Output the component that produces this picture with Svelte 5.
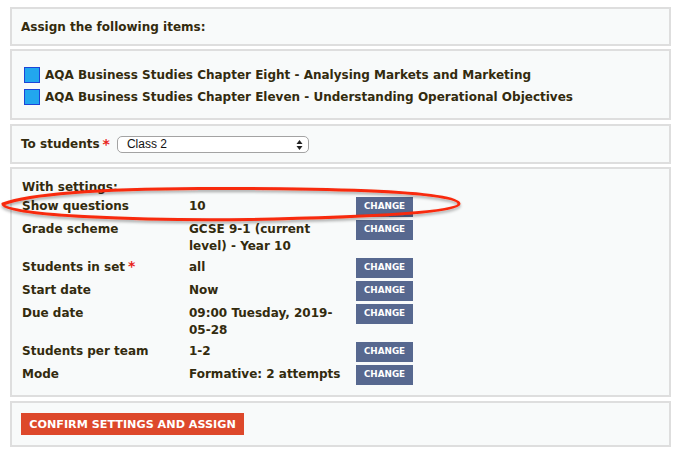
<script>
	const items = [
		'AQA Business Studies Chapter Eight - Analysing Markets and Marketing',
		'AQA Business Studies Chapter Eleven - Understanding Operational Objectives'
	];

	const settings = [
		{ label: 'Show questions', value: '10' },
		{ label: 'Grade scheme', value: 'GCSE 9-1 (current level) - Year 10' },
		{ label: 'Students in set', value: 'all', required: true },
		{ label: 'Start date', value: 'Now' },
		{ label: 'Due date', value: '09:00 Tuesday, 2019-05-28' },
		{ label: 'Students per team', value: '1-2' },
		{ label: 'Mode', value: 'Formative: 2 attempts' }
	];
</script>

<div class="page">
	<section class="panel heading">
		<strong>Assign the following items:</strong>
	</section>

	<section class="panel items">
		{#each items as item}
			<div class="item">
				<span class="item-icon"></span>
				<strong>{item}</strong>
			</div>
		{/each}
	</section>

	<section class="panel students">
		<strong>To students</strong><span class="req">*</span>
		<span class="select-wrap">
			<select>
				<option>Class 2</option>
			</select>
			<svg class="select-arrows" width="7" height="10" viewBox="0 0 7 10" aria-hidden="true">
				<path d="M3.5 0 L6.5 4 H0.5 Z M3.5 10 L6.5 6 H0.5 Z" fill="#222" />
			</svg>
		</span>
	</section>

	<section class="panel settings">
		<div class="settings-title"><strong>With settings:</strong></div>
		<div class="settings-grid">
			{#each settings as row}
				<div class="cell label">
					<strong>{row.label}</strong>{#if row.required}<span class="req">*</span>{/if}
				</div>
				<div class="cell value"><strong>{row.value}</strong></div>
				<button type="button" class="change">CHANGE</button>
			{/each}
		</div>
	</section>

	<section class="panel confirm">
		<button type="button" class="assign">CONFIRM SETTINGS AND ASSIGN</button>
	</section>

	<!-- hand drawn annotation over the first row -->
	<svg class="annotation" width="684" height="60" viewBox="0 0 684 60" aria-hidden="true">
		<defs>
			<filter id="ring-shadow" x="-5%" y="-30%" width="110%" height="170%">
				<feDropShadow dx="0" dy="2" stdDeviation="1.5" flood-color="#000" flood-opacity="0.35" />
			</filter>
		</defs>
		<path
			d="M3 24 C30 14 100 9 200 8.5 C300 8 459 10 459 24 C459 32 380 37 250 39.5 C150 41 3 36 3 24 Z"
			fill="none"
			stroke="#f8290c"
			stroke-width="3"
			filter="url(#ring-shadow)"
		/>
	</svg>
</div>

<style>
	:global(body) {
		margin: 0;
		background: #fff;
	}

	.page {
		position: relative;
		width: 684px;
		height: 455px;
		box-sizing: border-box;
		padding: 7px 0 0 10px;
		overflow: hidden;
		font-family: "DejaVu Sans", Verdana, sans-serif;
		font-size: 12px;
		color: #332b0e;
	}

	.panel {
		box-sizing: border-box;
		width: 661px;
		margin-bottom: 3px;
		border: 2px solid #dedede;
		background: #f8fafa;
		padding: 0 9px;
	}

	.heading {
		height: 39px;
		display: flex;
		align-items: center;
	}

	.items {
		height: 71px;
		margin-bottom: 4px;
		padding: 13px 12px 0;
	}

	.item {
		display: flex;
		align-items: center;
		gap: 5px;
		height: 22px;
	}

	.item-icon {
		box-sizing: border-box;
		width: 16px;
		height: 16px;
		background: #22a7ee;
		border: 1.5px solid #1b45d8;
	}

	.students {
		height: 40px;
		display: flex;
		align-items: center;
	}

	.req {
		color: #e8231a;
		font-size: 14px;
		line-height: 12px;
		font-weight: bold;
		margin-left: 3px;
	}

	.select-wrap {
		position: relative;
		display: block;
		margin-left: 7px;
	}

	select {
		display: block;
		box-sizing: border-box;
		width: 192px;
		height: 17px;
		padding: 0 0 0 9px;
		appearance: none;
		border: 1px solid #a3a3a3;
		border-radius: 5px;
		background: #fff;
		font-family: "Liberation Sans", Arial, sans-serif;
		font-size: 12px;
		color: #111;
	}

	.select-arrows {
		position: absolute;
		top: 4px;
		right: 6px;
	}

	.settings {
		height: 230px;
		margin-bottom: 4px;
		padding: 10px 10px 0;
	}

	.settings-title {
		height: 18px;
		line-height: 17px;
	}

	.settings-grid {
		display: grid;
		grid-template-columns: 167px 167px 57px;
		row-gap: 3px;
		align-items: start;
	}

	.cell {
		line-height: 17px;
		padding-top: 1px;
	}

	.value {
		padding-right: 12px;
	}

	.change {
		width: 57px;
		height: 20px;
		padding: 0 0 3px;
		border: 0;
		background: #57688f;
		color: #fff;
		font-family: inherit;
		font-size: 8.8px;
		font-weight: bold;
	}

	.confirm {
		height: 46px;
		padding-top: 10px;
	}

	.assign {
		display: block;
		width: 223px;
		height: 22px;
		padding: 0;
		border: 0;
		background: #dd482b;
		color: #fff;
		font-family: inherit;
		font-size: 11.2px;
		font-weight: bold;
	}

	.annotation {
		position: absolute;
		left: 0;
		top: 180px;
		pointer-events: none;
	}
</style>
